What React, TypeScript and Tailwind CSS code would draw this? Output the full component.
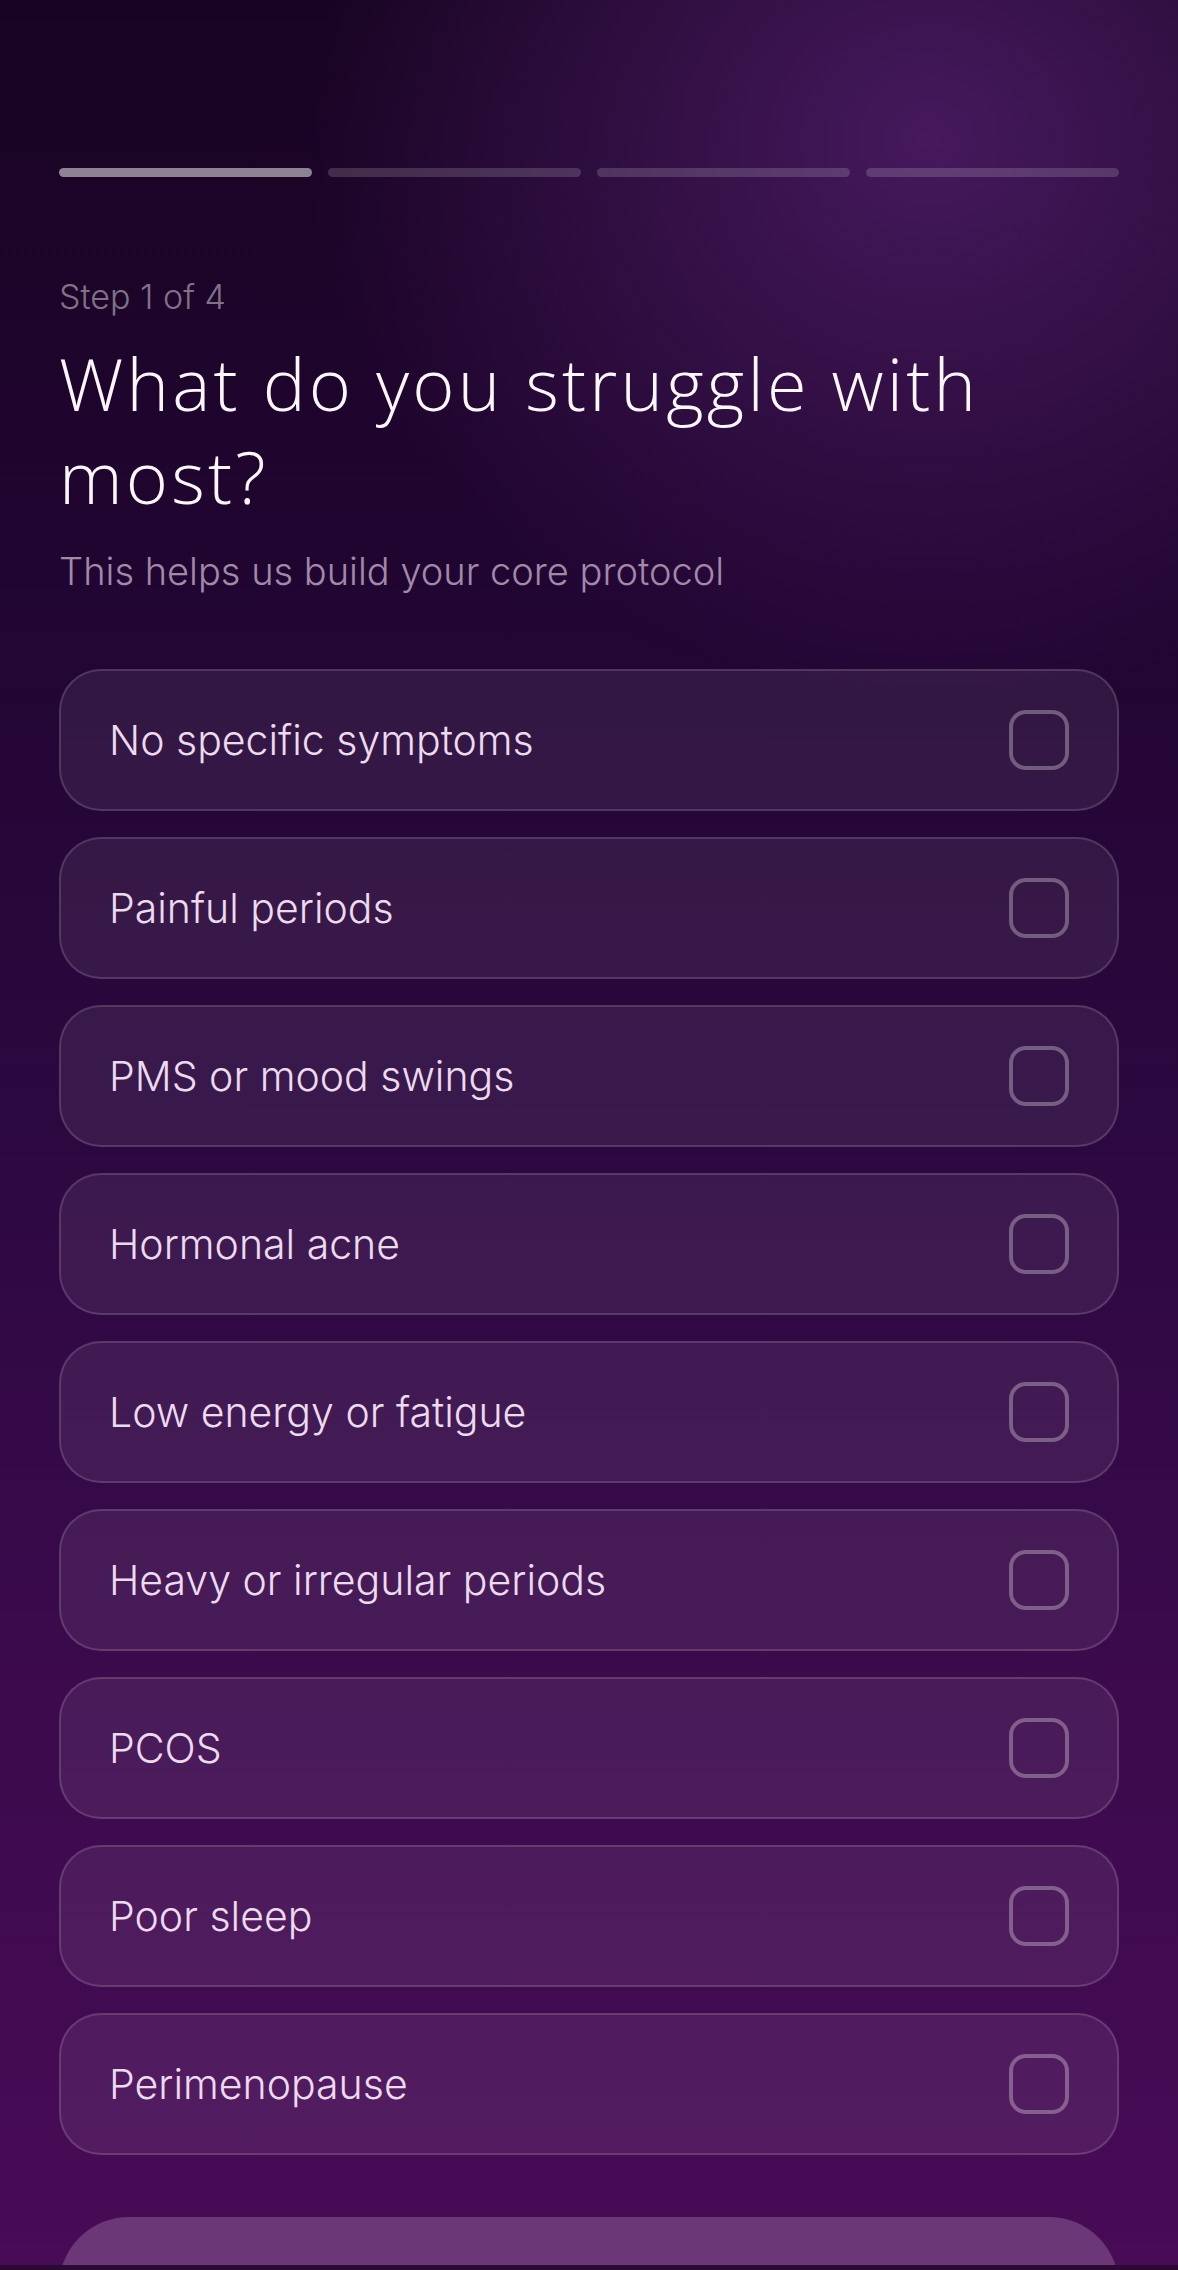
import React from "react";

const options = [
  "No specific symptoms",
  "Painful periods",
  "PMS or mood swings",
  "Hormonal acne",
  "Low energy or fatigue",
  "Heavy or irregular periods",
  "PCOS",
  "Poor sleep",
  "Perimenopause",
];

export default function App() {
  return (
    <div className="w-full h-[2270px] overflow-hidden flex flex-col bg-[#2b0a33]">
      <div
        className="flex-1 min-h-0 overflow-hidden px-[59px] pt-[168px] bg-[radial-gradient(ellipse_620px_560px_at_930px_140px,rgba(72,26,96,0.95)_0%,rgba(72,26,96,0)_100%),linear-gradient(180deg,#180422_0%,#210531_25%,#2c0840_50%,#3c0a4d_75%,#480b56_100%)]"
        style={{ fontFamily: "Inter, 'Noto Sans', sans-serif" }}
      >
        {/* progress */}
        <div className="grid grid-cols-4 gap-4">
          <div className="h-[9px] rounded-full bg-white/50" />
          <div className="h-[9px] rounded-full bg-white/[0.16]" />
          <div className="h-[9px] rounded-full bg-white/[0.16]" />
          <div className="h-[9px] rounded-full bg-white/[0.16]" />
        </div>

        <div className="mt-[100px] text-[34px] leading-[40px] font-light text-white/45">Step 1 of 4</div>

        <h1
          className="mt-[20px] text-[72px] leading-[93px] font-light tracking-[3.2px] text-[#fdf7fc]"
          style={{ fontFamily: "'Open Sans', 'DejaVu Sans', sans-serif" }}
        >
          What do you struggle with most?
        </h1>

        <p className="mt-[25px] text-[38px] leading-[46px] font-light text-[#a08aa8]">
          This helps us build your core protocol
        </p>

        <div className="mt-[75px] flex flex-col gap-[26px]">
          {options.map((o) => (
            <div
              key={o}
              className="h-[142px] rounded-[42px] border-2 border-white/[0.14] bg-white/[0.07] px-[48px] flex items-center justify-between"
            >
              <span className="text-[41px] leading-[50px] font-light text-[#ecdaee]">{o}</span>
              <span className="w-[60px] h-[60px] rounded-[17px] border-[4px] border-white/30" />
            </div>
          ))}
        </div>

        <div className="mt-[62px] h-[168px] rounded-[70px] bg-[#6b3777]" />
      </div>
      <div className="h-[5px] shrink-0 bg-[#2b0a33]" />
    </div>
  );
}
